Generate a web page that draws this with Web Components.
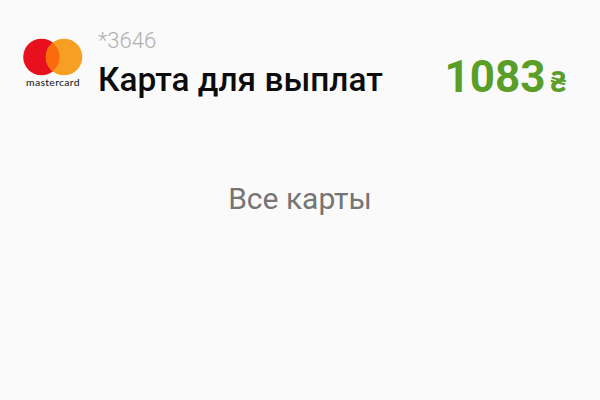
<!DOCTYPE html>
<html>
<head>
<meta charset="utf-8">
<style>
  html, body { margin: 0; padding: 0; background: #fafafa; }
  body { width: 600px; height: 400px; overflow: hidden; font-family: Roboto, sans-serif; }
</style>
</head>
<body>
<payout-card number="*3646" title="Карта для выплат" amount="1083" currency="₴"></payout-card>
<all-cards>Все карты</all-cards>
<script>
class McLogo extends HTMLElement {
  constructor() {
    super();
    this.attachShadow({ mode: 'open' });
    this.shadowRoot.innerHTML = `
      <style>
        :host { display: flex; flex-direction: column; align-items: center; width: 60px; }
        svg { display: block; }
        span { font: 500 10.4px/10px Lato, Roboto, sans-serif; color: #231f20; margin-top: 1px; letter-spacing: 0.3px; white-space: nowrap; }
      </style>
      <svg width="60" height="38" viewBox="0 0 60 38">
        <circle cx="18.5" cy="19" r="18.3" fill="#e8101f"/>
        <circle cx="41" cy="19" r="18.3" fill="#f79f22"/>
        <path d="M29.75 4.7a18.3 18.3 0 0 1 0 28.6a18.3 18.3 0 0 1 0-28.6z" fill="#fb6a0c"/>
      </svg>
      <span>mastercard</span>`;
  }
}

class PayoutCard extends HTMLElement {
  constructor() {
    super();
    this.attachShadow({ mode: 'open' });
  }
  connectedCallback() {
    this.shadowRoot.innerHTML = `
      <style>
        :host { display: flex; align-items: flex-start; padding: 28px 33px 0 23px; height: 87px; box-sizing: content-box; }
        mc-logo { margin-top: 10px; }
        .info { margin-left: 15px; flex: 1; }
        .num { font-size: 22px; line-height: 26px; color: #b0b0b0; font-weight: 300; }
        .title { font-size: 33.4px; line-height: 38px; font-weight: 500; color: #0c0c0c; margin-top: 7px; white-space: nowrap; }
        .sum { display: flex; align-items: baseline; color: #5a9e2a; font-weight: 700; margin-top: 21px; white-space: nowrap; }
        .amount { font-size: 44px; line-height: 56px; }
        .cur { font: 900 29px Lato, sans-serif; margin-left: 4px; }
      </style>
      <mc-logo></mc-logo>
      <div class="info">
        <div class="num">${this.getAttribute('number')}</div>
        <div class="title">${this.getAttribute('title')}</div>
      </div>
      <div class="sum">
        <span class="amount">${this.getAttribute('amount')}</span>
        <span class="cur">${this.getAttribute('currency')}</span>
      </div>`;
  }
}

class AllCards extends HTMLElement {
  constructor() {
    super();
    this.attachShadow({ mode: 'open' });
    this.shadowRoot.innerHTML = `
      <style>
        :host { display: block; text-align: center; margin-top: 65px; font-size: 30px; line-height: 38px; color: #757575; }
      </style>
      <slot></slot>`;
  }
}

customElements.define('mc-logo', McLogo);
customElements.define('payout-card', PayoutCard);
customElements.define('all-cards', AllCards);
</script>
</body>
</html>
